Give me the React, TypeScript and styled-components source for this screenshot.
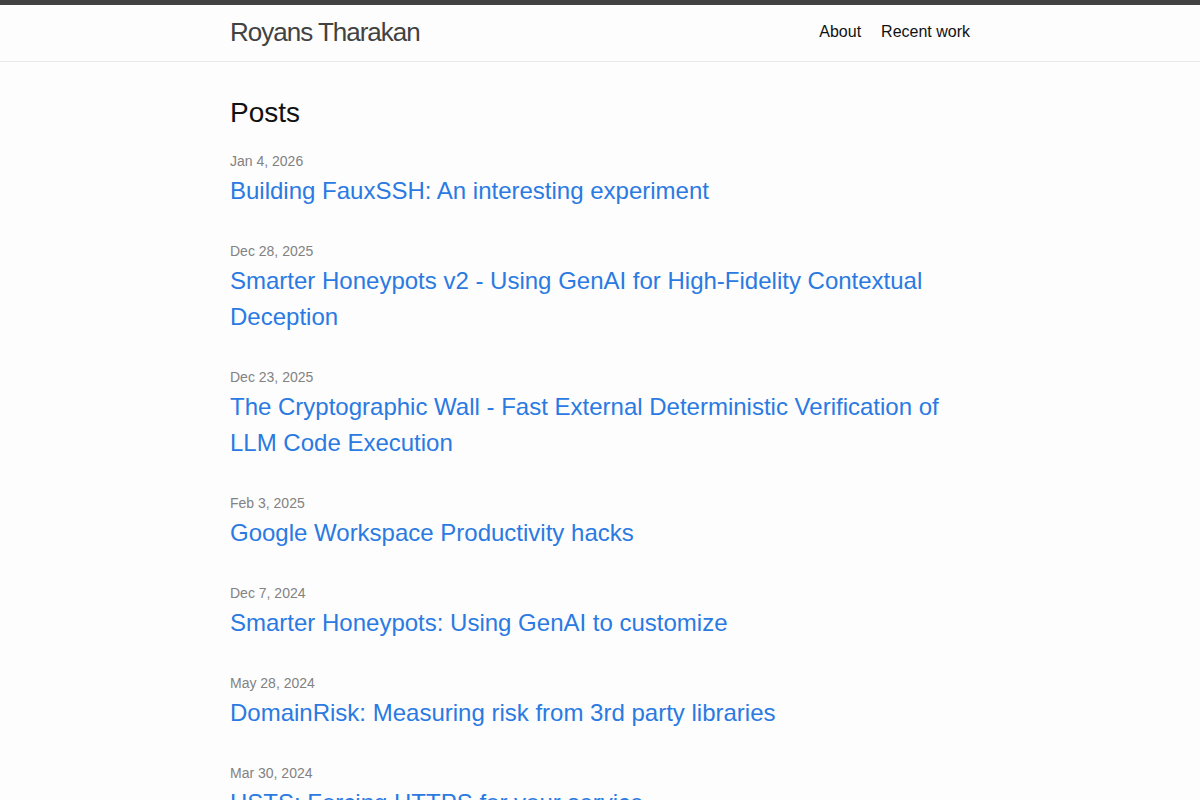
import React from "react";
import styled, { createGlobalStyle } from "styled-components";

const GlobalStyle = createGlobalStyle`
  body {
    margin: 0;
    font: 400 16px/1.5 "Liberation Sans", Arial, sans-serif;
    color: #111;
    background-color: #fdfdfd;
  }
`;

const Wrapper = styled.div`
  max-width: 740px;
  margin: 0 auto;
  padding: 0 30px;
`;

const SiteHeader = styled.header`
  border-top: 5px solid #424242;
  border-bottom: 1px solid #e8e8e8;
  min-height: 55.95px;
`;

const HeaderRow = styled(Wrapper)`
  display: flex;
  justify-content: space-between;
  align-items: flex-start;
`;

const SiteTitle = styled.a`
  font-size: 26px;
  font-weight: 300;
  line-height: 54px;
  letter-spacing: -1px;
  color: #424242;
  text-decoration: none;
`;

const Nav = styled.nav`
  display: flex;
  gap: 20px;
  line-height: 54px;
`;

const NavLink = styled.a`
  color: #111;
  text-decoration: none;
`;

const PageContent = styled.main`
  padding: 30px 0;
`;

const Heading = styled.h2`
  font-size: 28px;
  font-weight: 400;
  line-height: 42px;
  margin: 0 0 15px;
`;

const PostList = styled.ul`
  list-style: none;
  margin: 0;
  padding: 0;
`;

const PostItem = styled.li`
  margin-bottom: 30px;
`;

const PostMeta = styled.span`
  font-size: 14px;
  color: #828282;
`;

const PostTitle = styled.h3`
  margin: 0;
  font-size: 24px;
  font-weight: 400;
  line-height: 36px;
`;

const PostLink = styled.a`
  display: block;
  color: #2a7ae2;
  text-decoration: none;
`;

const posts = [
  { date: "Jan 4, 2026", title: "Building FauxSSH: An interesting experiment" },
  { date: "Dec 28, 2025", title: "Smarter Honeypots v2 - Using GenAI for High-Fidelity Contextual Deception" },
  { date: "Dec 23, 2025", title: "The Cryptographic Wall - Fast External Deterministic Verification of LLM Code Execution" },
  { date: "Feb 3, 2025", title: "Google Workspace Productivity hacks" },
  { date: "Dec 7, 2024", title: "Smarter Honeypots: Using GenAI to customize" },
  { date: "May 28, 2024", title: "DomainRisk: Measuring risk from 3rd party libraries" },
  { date: "Mar 30, 2024", title: "HSTS: Forcing HTTPS for your service" },
];

export default function App() {
  return (
    <>
      <GlobalStyle />
      <SiteHeader>
        <HeaderRow>
          <SiteTitle href="#">Royans Tharakan</SiteTitle>
          <Nav>
            <NavLink href="#">About</NavLink>
            <NavLink href="#">Recent work</NavLink>
          </Nav>
        </HeaderRow>
      </SiteHeader>
      <PageContent>
        <Wrapper>
          <Heading>Posts</Heading>
          <PostList>
            {posts.map((p) => (
              <PostItem key={p.title}>
                <PostMeta>{p.date}</PostMeta>
                <PostTitle>
                  <PostLink href="#">{p.title}</PostLink>
                </PostTitle>
              </PostItem>
            ))}
          </PostList>
        </Wrapper>
      </PageContent>
    </>
  );
}
